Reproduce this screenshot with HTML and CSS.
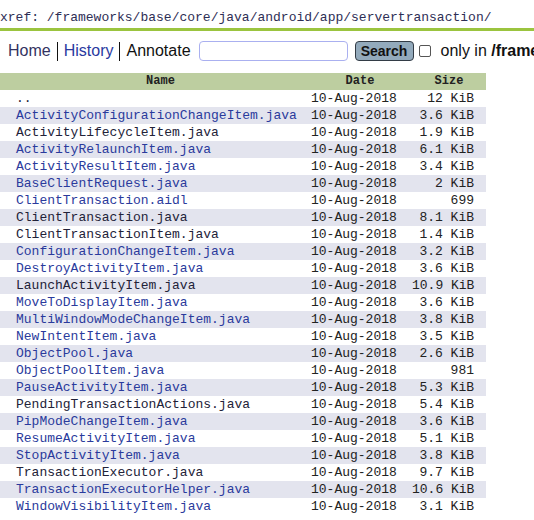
FILE: index.html
```html
<!DOCTYPE html>
<html>
<head>
<meta charset="utf-8">
<link rel="stylesheet" href="styles.css">
</head>
<body>
<div class="xref">xref: /frameworks/base/core/java/android/app/servertransaction/</div>
<div class="nav">
  <a class="home">Home</a><span class="sep"></span><a class="hist">History</a><span class="sep"></span><span class="plain">Annotate</span><input class="search-input" type="text"><button class="search-btn">Search</button><input class="chk" type="checkbox"><span class="only">only in <b>/frameworks/base/core/java/android/app/servertransaction/</b></span>
</div>
<table class="list">
  <thead>
    <tr><th class="c0"></th><th class="c1">Name</th><th class="c2">Date</th><th class="c3">Size</th></tr>
  </thead>
  <tbody>
    <tr><td></td><td class="dk">..</td><td class="d">10-Aug-2018</td><td class="s">12 KiB</td></tr>
    <tr class="alt"><td></td><td class="lk">ActivityConfigurationChangeItem.java</td><td class="d">10-Aug-2018</td><td class="s">3.6 KiB</td></tr>
    <tr><td></td><td class="dk">ActivityLifecycleItem.java</td><td class="d">10-Aug-2018</td><td class="s">1.9 KiB</td></tr>
    <tr class="alt"><td></td><td class="lk">ActivityRelaunchItem.java</td><td class="d">10-Aug-2018</td><td class="s">6.1 KiB</td></tr>
    <tr><td></td><td class="lk">ActivityResultItem.java</td><td class="d">10-Aug-2018</td><td class="s">3.4 KiB</td></tr>
    <tr class="alt"><td></td><td class="lk">BaseClientRequest.java</td><td class="d">10-Aug-2018</td><td class="s">2 KiB</td></tr>
    <tr><td></td><td class="lk">ClientTransaction.aidl</td><td class="d">10-Aug-2018</td><td class="s">699</td></tr>
    <tr class="alt"><td></td><td class="dk">ClientTransaction.java</td><td class="d">10-Aug-2018</td><td class="s">8.1 KiB</td></tr>
    <tr><td></td><td class="dk">ClientTransactionItem.java</td><td class="d">10-Aug-2018</td><td class="s">1.4 KiB</td></tr>
    <tr class="alt"><td></td><td class="lk">ConfigurationChangeItem.java</td><td class="d">10-Aug-2018</td><td class="s">3.2 KiB</td></tr>
    <tr><td></td><td class="lk">DestroyActivityItem.java</td><td class="d">10-Aug-2018</td><td class="s">3.6 KiB</td></tr>
    <tr class="alt"><td></td><td class="dk">LaunchActivityItem.java</td><td class="d">10-Aug-2018</td><td class="s">10.9 KiB</td></tr>
    <tr><td></td><td class="lk">MoveToDisplayItem.java</td><td class="d">10-Aug-2018</td><td class="s">3.6 KiB</td></tr>
    <tr class="alt"><td></td><td class="lk">MultiWindowModeChangeItem.java</td><td class="d">10-Aug-2018</td><td class="s">3.8 KiB</td></tr>
    <tr><td></td><td class="lk">NewIntentItem.java</td><td class="d">10-Aug-2018</td><td class="s">3.5 KiB</td></tr>
    <tr class="alt"><td></td><td class="lk">ObjectPool.java</td><td class="d">10-Aug-2018</td><td class="s">2.6 KiB</td></tr>
    <tr><td></td><td class="lk">ObjectPoolItem.java</td><td class="d">10-Aug-2018</td><td class="s">981</td></tr>
    <tr class="alt"><td></td><td class="lk">PauseActivityItem.java</td><td class="d">10-Aug-2018</td><td class="s">5.3 KiB</td></tr>
    <tr><td></td><td class="dk">PendingTransactionActions.java</td><td class="d">10-Aug-2018</td><td class="s">5.4 KiB</td></tr>
    <tr class="alt"><td></td><td class="lk">PipModeChangeItem.java</td><td class="d">10-Aug-2018</td><td class="s">3.6 KiB</td></tr>
    <tr><td></td><td class="lk">ResumeActivityItem.java</td><td class="d">10-Aug-2018</td><td class="s">5.1 KiB</td></tr>
    <tr class="alt"><td></td><td class="lk">StopActivityItem.java</td><td class="d">10-Aug-2018</td><td class="s">3.8 KiB</td></tr>
    <tr><td></td><td class="dk">TransactionExecutor.java</td><td class="d">10-Aug-2018</td><td class="s">9.7 KiB</td></tr>
    <tr class="alt"><td></td><td class="lk">TransactionExecutorHelper.java</td><td class="d">10-Aug-2018</td><td class="s">10.6 KiB</td></tr>
    <tr><td></td><td class="lk">WindowVisibilityItem.java</td><td class="d">10-Aug-2018</td><td class="s">3.1 KiB</td></tr>
  </tbody>
</table>
</body>
</html>
```
FILE: styles.css
```css
html, body {
  margin: 0;
  padding: 0;
  background: #ffffff;
  overflow: hidden;
}
body {
  width: 534px;
}
.xref {
  font-family: "Liberation Mono", monospace;
  font-size: 13px;
  color: #2e2e55;
  line-height: 16px;
  padding: 10px 0 2px 0;
  border-bottom: 3px solid #9bc43f;
  white-space: nowrap;
}
.nav {
  display: flex;
  align-items: center;
  height: 20px;
  margin-top: 10px;
  padding-left: 8px;
  font-family: "Liberation Sans", Arial, sans-serif;
  font-size: 16px;
  white-space: nowrap;
  overflow: hidden;
}
.nav > * { flex-shrink: 0; }
.home { color: #33335f; }
.hist { color: #2a3aa0; }
.plain { color: #111111; }
.sep {
  display: inline-block;
  width: 1px;
  height: 19px;
  background: #111111;
  margin: 0 6px;
}
.search-input {
  box-sizing: border-box;
  width: 149px;
  height: 20px;
  margin: 0 0 0 8px;
  border: 1px solid #aab0f0;
  border-radius: 4px;
  padding: 0;
  background: #fff;
}
.search-btn {
  box-sizing: border-box;
  width: 59px;
  height: 20px;
  margin: 0 0 0 7px;
  padding: 0;
  background: #93aabc;
  border: 1px solid #333c46;
  border-radius: 4px;
  font-family: "Liberation Sans", Arial, sans-serif;
  font-weight: bold;
  font-size: 14px;
  color: #111111;
}
.chk {
  box-sizing: border-box;
  width: 12px;
  height: 12px;
  margin: 0 0 0 5px;
  appearance: none;
  -webkit-appearance: none;
  border: 1px solid #555555;
  border-radius: 2px;
  background: #fff;
}
.only {
  margin-left: 10px;
  color: #111111;
}
.only b { font-weight: bold; }
.list {
  margin-top: 12px;
  border-collapse: collapse;
  width: 486px;
  table-layout: fixed;
  font-family: "Liberation Mono", monospace;
  font-size: 13px;
}
.list th {
  background: #bdcea0;
  height: 17px;
  padding: 0;
  font-size: 12px;
  font-weight: bold;
  color: #222222;
  text-align: center;
  line-height: 17px;
}
.c0 { width: 13px; }
.c1 { width: 295px; }
.c2 { width: 104px; }
.c3 { width: 74px; }
.list td {
  height: 17px;
  padding: 0;
  line-height: 17px;
  white-space: nowrap;
  overflow: hidden;
}
.list tr.alt td { background: #e3e4ee; }
.list td.lk { padding-left: 3px; color: #2a3a9c; }
.list td.dk { padding-left: 3px; color: #222238; }
.list td.d { padding-left: 3px; color: #222222; }
.list td.s { text-align: right; padding-right: 12px; color: #222222; }
```
